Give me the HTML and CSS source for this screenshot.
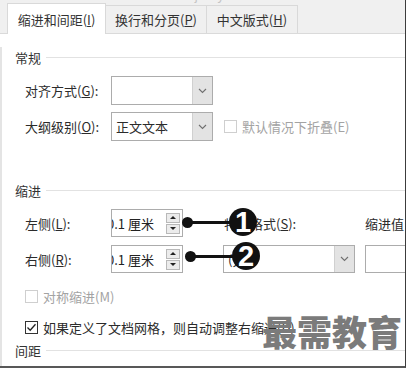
FILE: index.html
```html
<!DOCTYPE html>
<html lang="zh-CN">

<head>
    <meta charset="UTF-8">
    <meta name="viewport" content="width=device-width, initial-scale=1.0">
    <title>段落</title>
    <link rel="stylesheet" href="styles.css">
</head>

<body>
    <div class="dialog">
        <div class="site-mark">www.zuixujiaoyu.com</div>

        <div class="tabs">
            <div class="tab active tab-indent">缩进和间距(<u>I</u>)</div>
            <div class="tab tab-lines">换行和分页(<u>P</u>)</div>
            <div class="tab tab-asian">中文版式(<u>H</u>)</div>
        </div>

        <div class="panel">
            <div class="legend">常规</div>

            <div class="field first">
                <span class="label">对齐方式(<u>G</u>):</span>
                <div class="select general">
                    <span class="value"></span>
                    <span class="drop"><svg width="9" height="6" viewBox="0 0 9 6"><polyline points="1,1 4.5,4.5 8,1" fill="none" stroke="#707070" stroke-width="1.1"/></svg></span>
                </div>
            </div>

            <div class="field">
                <span class="label">大纲级别(<u>O</u>):</span>
                <div class="select general">
                    <span class="value">正文文本</span>
                    <span class="drop"><svg width="9" height="6" viewBox="0 0 9 6"><polyline points="1,1 4.5,4.5 8,1" fill="none" stroke="#707070" stroke-width="1.1"/></svg></span>
                </div>
                <label class="check disabled collapse">
                    <span class="box"></span>
                    <span>默认情况下折叠(E)</span>
                </label>
            </div>

            <div class="legend indent-title">缩进</div>

            <div class="indent-row first">
                <span class="label">左侧(<u>L</u>):</span>
                <div class="spin">
                    <span class="value"><span class="scrolled">0.1 厘米</span></span>
                    <span class="arrows">
                        <span class="arrow up"></span>
                        <span class="arrow down"></span>
                    </span>
                </div>
                <span class="special-label">特殊格式(<u>S</u>):</span>
                <span class="by-label">缩进值</span>
            </div>

            <div class="indent-row">
                <span class="label">右侧(<u>R</u>):</span>
                <div class="spin">
                    <span class="value"><span class="scrolled">0.1 厘米</span></span>
                    <span class="arrows">
                        <span class="arrow up"></span>
                        <span class="arrow down"></span>
                    </span>
                </div>
                <div class="select special">
                    <span class="value">(无)</span>
                    <span class="drop"><svg width="9" height="6" viewBox="0 0 9 6"><polyline points="1,1 4.5,4.5 8,1" fill="none" stroke="#707070" stroke-width="1.1"/></svg></span>
                </div>
                <div class="input by"></div>
            </div>

            <label class="check disabled mirror">
                <span class="box"></span>
                <span>对称缩进(M)</span>
            </label>

            <label class="check grid-check">
                <span class="box checked"><svg width="11" height="11" viewBox="0 0 11 11"><polyline points="1.5,5.5 4.2,8.3 9.5,2.3" fill="none" stroke="#222" stroke-width="1.3"/></svg></span>
                <span>如果定义了文档网格，则自动调整右缩进(<u>D</u>)</span>
            </label>

            <div class="legend spacing-title">间距</div>
        </div>

        <div class="callout one">
            <span class="dot"></span>
            <span class="stem"></span>
            <span class="num">1</span>
        </div>
        <div class="callout two">
            <span class="dot"></span>
            <span class="stem"></span>
            <span class="num">2</span>
        </div>

        <div class="brand">最需教育</div>
    </div>
</body>

</html>
```

FILE: styles.css
```css
body {
    margin: 0;
    background-color: #ffffff;
    font-family: "Noto Sans CJK SC", "Microsoft YaHei", sans-serif;
    font-size: 13px;
    color: #2b2b2b;
}

u {
    text-decoration: underline;
    text-underline-offset: 1px;
}

.dialog {
    position: relative;
    width: 405px;
    height: 366px;
    border-right: 1px solid #3c3c3c;
    border-bottom: 2px solid #585858;
    overflow: hidden;
}

.site-mark {
    position: absolute;
    left: 128px;
    top: -12px;
    font-family: "Liberation Sans", sans-serif;
    font-size: 13px;
    letter-spacing: 0.6px;
    color: #c4c4c4;
}

/* tab strip */
.tabs {
    display: flex;
    align-items: flex-end;
    height: 33px;
    padding-left: 7px;
    background-color: #f0f0f0;
    border-bottom: 1px solid #dadada;
}

.tab {
    display: flex;
    align-items: center;
    justify-content: center;
    height: 28px;
    box-sizing: border-box;
    border: 1px solid #d9d9d9;
    border-bottom: none;
    background-color: #f0f0f0;
    color: #333333;
}

.tab + .tab {
    margin-left: -1px;
}

.tab.active {
    height: 31px;
    margin-bottom: -1px;
    background-color: #ffffff;
}

.tab-indent { width: 99px; }
.tab-lines { width: 102px; }
.tab-asian { width: 92px; }

/* panel */
.panel {
    border-left: 2px solid #e4e4e4;
    height: 332px;
}

.legend {
    display: flex;
    align-items: center;
    gap: 5px;
    height: 20px;
    margin-top: 13px;
    padding-left: 13px;
    color: #333333;
}

.legend::after {
    content: "";
    flex: 1;
    border-top: 1px solid #e2e2e2;
}

.indent-title {
    margin-top: 39px;
}

.spacing-title {
    margin-top: 3px;
}

.field,
.indent-row {
    display: flex;
    align-items: center;
    height: 29px;
    margin-top: 7px;
    padding-left: 23px;
}

.field.first,
.indent-row.first {
    margin-top: 9px;
}

.indent-row {
    height: 28px;
    margin-top: 8px;
}

.label {
    width: 86px;
    flex-shrink: 0;
}

/* select boxes */
.select {
    display: flex;
    height: 100%;
    box-sizing: border-box;
    border: 1px solid #acacac;
    background-color: #ffffff;
    flex-shrink: 0;
}

.select .value {
    flex: 1;
    display: flex;
    align-items: center;
    padding-left: 4px;
    overflow: hidden;
    white-space: nowrap;
}

.select .drop {
    display: flex;
    align-items: center;
    justify-content: center;
    width: 19px;
    background-color: #e3e3e3;
    border-left: 1px solid #d0d0d0;
}

.select.general {
    width: 102px;
}

.select.special {
    width: 132px;
    margin-left: 40px;
}

.input.by {
    width: 60px;
    height: 100%;
    margin-left: 10px;
    box-sizing: border-box;
    border: 1px solid #acacac;
    flex-shrink: 0;
}

/* spin boxes */
.spin {
    display: flex;
    align-items: center;
    width: 72px;
    height: 100%;
    box-sizing: border-box;
    border: 1px solid #acacac;
    flex-shrink: 0;
}

.spin .value {
    flex: 1;
    overflow: hidden;
    white-space: nowrap;
}

.spin .scrolled {
    display: inline-block;
    margin-left: -5px;
    color: #222222;
}

.arrows {
    display: flex;
    flex-direction: column;
    gap: 1px;
    margin-right: 2px;
}

.arrow {
    display: flex;
    align-items: center;
    justify-content: center;
    width: 14px;
    height: 10px;
    box-sizing: border-box;
    border: 1px solid #b9b9b9;
    background-color: #ececec;
}

.arrow.up::before {
    content: "";
    border-left: 3px solid transparent;
    border-right: 3px solid transparent;
    border-bottom: 3px solid #222222;
}

.arrow.down::before {
    content: "";
    border-left: 3px solid transparent;
    border-right: 3px solid transparent;
    border-top: 3px solid #222222;
}

.special-label {
    width: 141px;
    margin-left: 41px;
    flex-shrink: 0;
}

.by-label {
    white-space: nowrap;
}

/* check boxes */
.check {
    display: flex;
    align-items: center;
    gap: 5px;
    height: 20px;
    white-space: nowrap;
}

.check .box {
    display: flex;
    align-items: center;
    justify-content: center;
    width: 13px;
    height: 13px;
    box-sizing: border-box;
    border: 1px solid #333333;
    background-color: #ffffff;
}

.check.disabled {
    color: #a3a3a3;
}

.check.disabled .box {
    border-color: #cfcfcf;
}

.collapse {
    margin-left: 11px;
}

.mirror {
    margin-top: 13px;
    padding-left: 23px;
}

.grid-check {
    margin-top: 11px;
    padding-left: 23px;
}

/* numbered callouts */
.callout {
    position: absolute;
    display: flex;
    align-items: center;
}

.callout.one {
    left: 182px;
    top: 208px;
}

.callout.two {
    left: 185px;
    top: 242px;
}

.dot {
    width: 11px;
    height: 11px;
    border-radius: 50%;
    background-color: #111111;
    flex-shrink: 0;
}

.stem {
    width: 40px;
    height: 3px;
    margin-left: -2px;
    background-color: #111111;
    flex-shrink: 0;
}

.num {
    display: flex;
    align-items: center;
    justify-content: center;
    width: 28px;
    height: 28px;
    margin-left: -2px;
    border-radius: 50%;
    background-color: #111111;
    color: #ffffff;
    font-family: "Liberation Sans", Arial, sans-serif;
    font-size: 29px;
    font-weight: bold;
    line-height: 1;
    flex-shrink: 0;
}

.brand {
    position: absolute;
    left: 262px;
    top: 313px;
    font-size: 35px;
    font-weight: 900;
    line-height: 1;
    color: #7b7b7b;
    white-space: nowrap;
}
```
